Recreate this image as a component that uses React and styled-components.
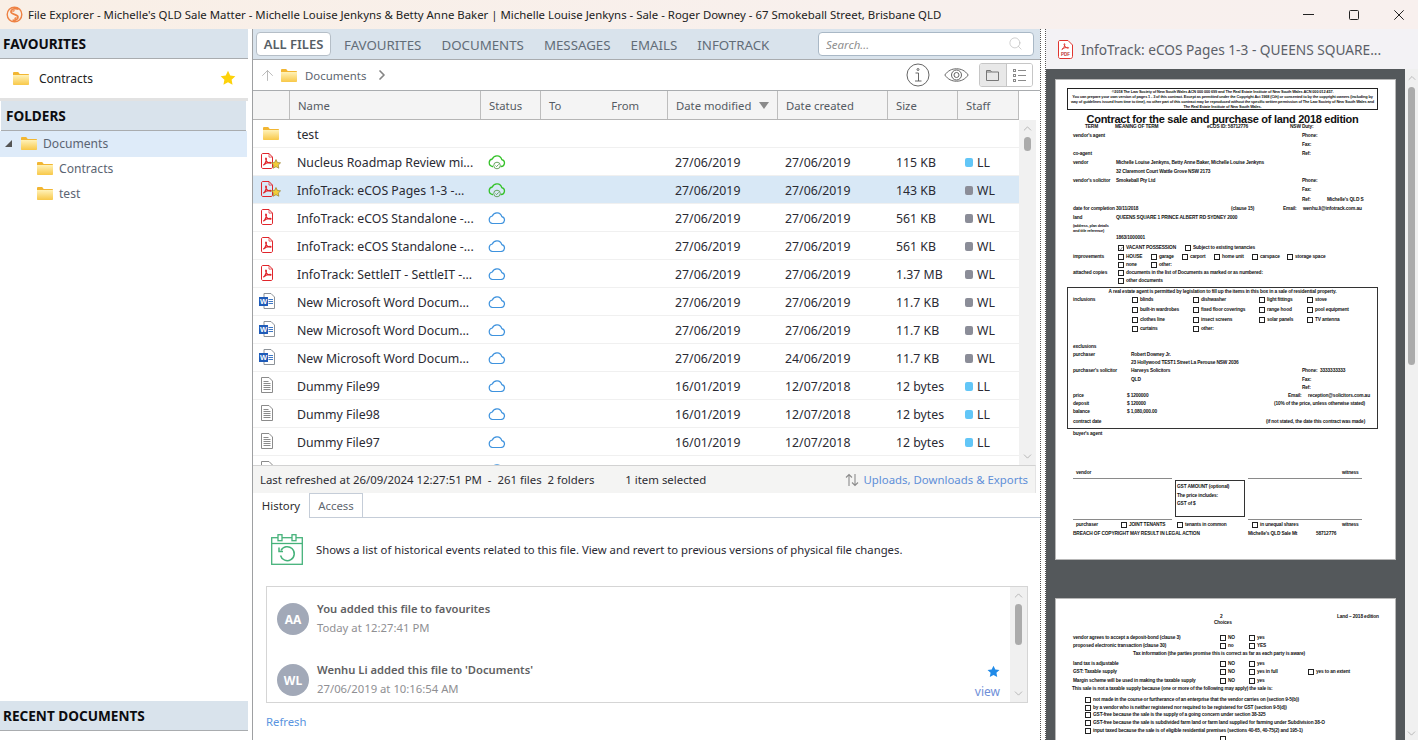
import React from "react";
import styled, { createGlobalStyle, css } from "styled-components";
import { ChevronUp, ChevronDown, ChevronRight, Search, ArrowUp } from "lucide-react";

const UI_FONT = `"Noto Sans", "Open Sans", sans-serif`;

const GlobalStyle = createGlobalStyle`
  html, body { margin: 0; padding: 0; background: #fff; }
  body { font-family: ${UI_FONT}; font-size: 12.3px; color: #2a2a33; }
  * { box-sizing: border-box; }
`;

const Window = styled.div`
  width: 1418px;
  height: 740px;
  overflow: hidden;
  display: flex;
  flex-direction: column;
`;

/* title bar */
const TitleBar = styled.div`
  height: 29px;
  flex: none;
  display: flex;
  align-items: center;
  padding-left: 6px;
  background: linear-gradient(90deg, #f9efe6, #f8f0ed 60%, #f8f0ee);
`;
const TitleText = styled.div`
  margin-left: 5px;
  font-size: 11.4px;
  color: #222;
  white-space: nowrap;
`;
const WindowControls = styled.div`
  margin-left: auto;
  display: flex;
  align-items: center;
  gap: 35px;
  padding-right: 14px;
`;

const Body = styled.div`
  flex: 1;
  display: flex;
  min-height: 0;
`;

/* left column */
const Sidebar = styled.aside`
  width: 252px;
  flex: none;
  display: flex;
  flex-direction: column;
  padding-right: 4px;
`;
const SectionHeader = styled.div`
  height: 30px;
  flex: none;
  display: flex;
  align-items: center;
  padding-left: ${(p) => (p.$inset ? 5 : 3)}px;
  margin: ${(p) => (p.$inset ? "0 2px 0 1px" : "0")};
  background: #d9e3ec;
  border-bottom: 1px solid #a9acaf;
  font-size: 13.6px;
  font-weight: 700;
  color: #0c0c10;
`;
const FavouriteRow = styled.div`
  height: 42px;
  display: flex;
  align-items: center;
  gap: 10px;
  padding: 0 12px 1px 13px;
  font-size: 12px;
  color: #222;
  border-bottom: 3px solid #e2e2e2;
`;
const StarWrap = styled.span`
  margin-left: auto;
  display: flex;
`;
const TreeRow = styled.div`
  height: ${(p) => (p.$root ? 26 : 25)}px;
  display: flex;
  align-items: center;
  gap: 6px;
  padding-left: ${(p) => p.$indent}px;
  padding-bottom: 2px;
  margin-right: 1px;
  background: ${(p) => (p.$active ? "#deebf9" : "transparent")};
  color: #5b6472;
  font-size: 12.1px;
`;
const TreeArrow = styled.span`
  width: 0;
  height: 0;
  margin-right: 3px;
  border-style: solid;
  border-width: 0 0 7px 7px;
  border-color: transparent transparent #555 transparent;
`;
const SidebarFill = styled.div`
  flex: 1;
`;
const SidebarFoot = styled.div`
  height: 9px;
  flex: none;
`;

/* middle column */
const Main = styled.main`
  width: 788px;
  flex: none;
  display: flex;
  flex-direction: column;
  border-left: 1px solid #9ea0a2;
  min-height: 0;
`;
const TabBar = styled.div`
  height: 31px;
  flex: none;
  display: flex;
  align-items: center;
  padding: 3px 6px 4px 3px;
  background: #d9e3ec;
  border-bottom: 1px solid #a9acaf;
`;
const AllFiles = styled.div`
  width: 75px;
  height: 24px;
  display: flex;
  align-items: center;
  justify-content: center;
  padding-top: 1px;
  background: #fff;
  border: 1px solid #b5bec7;
  border-radius: 4px;
  font-size: 13px;
  font-weight: 600;
  color: #565e66;
  margin-right: 13px;
`;
const Tab = styled.div`
  padding-top: 2px;
  font-size: 13.3px;
  color: #626d78;
  margin-right: ${(p) => p.$gap}px;
  white-space: nowrap;
`;
const SearchBox = styled.div`
  margin-left: auto;
  width: 216px;
  height: 24px;
  display: flex;
  align-items: center;
  padding: 0 10px 0 7px;
  background: #fff;
  border: 1px solid #a9b8c6;
  border-radius: 4px;
  color: #b5b5b5;
`;
const SearchField = styled.input`
  flex: 1;
  min-width: 0;
  border: 0;
  outline: 0;
  padding: 2px 0 0;
  font-family: ${UI_FONT};
  font-size: 11.5px;
  font-style: italic;
  &::placeholder { color: #8f8f8f; opacity: 1; }
`;
const PathBar = styled.div`
  height: 31px;
  flex: none;
  display: flex;
  align-items: center;
  padding: 0 7px 0 6px;
  border-bottom: 1px solid #a9acaf;
  font-size: 11.4px;
  color: #5d6570;
`;
const PathText = styled.span`
  margin: 0 8px 0 8px;
`;
const PathGap = styled.span`
  width: 5px;
`;
const PathTools = styled.div`
  margin-left: auto;
  display: flex;
  align-items: center;
  gap: 14px;
`;
const EyeWrap = styled.span`
  display: flex;
  margin-right: -4px;
`;
const ViewToggle = styled.div`
  display: flex;
  width: 54px;
  height: 24px;
  border: 1px solid #c6c6c6;
  border-radius: 3px;
  overflow: hidden;
`;
const ViewOption = styled.div`
  flex: 1;
  display: flex;
  align-items: center;
  justify-content: center;
  background: ${(p) => (p.$on ? "#e8e8e8" : "#fff")};
  & + & { border-left: 1px solid #c6c6c6; }
`;

const columns = css`
  display: grid;
  grid-template-columns: 37px 191px 60px 127px 110px 110px 70px 61px;
  align-items: center;
`;
const HeadRow = styled.div`
  ${columns}
  height: 29px;
  flex: none;
  width: 766px;
  background: #f4f4f4;
  border-bottom: 1px solid #b5b5b5;
  align-items: stretch;
  font-size: 11.3px;
  color: #555b63;
`;
const HeadCell = styled.div`
  display: flex;
  align-items: center;
  padding-left: 8px;
  border-right: 1px solid #bdbdbd;
`;
const HeadFrom = styled.span`
  margin-left: 50px;
`;
const SortMark = styled.span`
  margin-left: 8px;
  width: 0;
  height: 0;
  border-style: solid;
  border-width: 7px 5px 0 5px;
  border-color: #8a8a8a transparent transparent transparent;
`;
const HeadRest = styled.div`
  width: 21px;
`;
const HeadWrap = styled.div`
  display: flex;
  flex: none;
`;
const ListArea = styled.div`
  height: 345px;
  flex: none;
  display: flex;
  width: 783px;
  overflow: hidden;
`;
const Rows = styled.div`
  width: 766px;
  flex: none;
`;
const FileRow = styled.div`
  ${columns}
  height: 28px;
  border-bottom: 1px solid #f0f0f0;
  background: ${(p) => (p.$selected ? "#d8e8f6" : "#fff")};
  font-size: 12.3px;
  color: #2a2a33;
`;
const IconCell = styled.div`
  display: flex;
  align-items: center;
  padding-left: ${(p) => p.$pad}px;
  padding-bottom: 1px;
`;
const NameCell = styled.div`
  padding: 2px 0 0 7px;
  white-space: nowrap;
`;
const PlainCell = styled.div`
  padding: 2px 0 0 ${(p) => p.$pad || 7}px;
  white-space: nowrap;
`;
const StatusCell = styled.div`
  display: flex;
  align-items: center;
  padding: 1px 0 0 7px;
`;
const StaffCell = styled.div`
  display: flex;
  align-items: center;
  gap: 4px;
  padding: 2px 0 0 7px;
`;
const StaffDot = styled.span`
  width: 8px;
  height: 9px;
  border-radius: 2px;
  background: ${(p) => (p.$light ? "#62c6f7" : "#8b8d98")};
`;
const IconStack = styled.span`
  position: relative;
  display: inline-flex;
  width: 21px;
  height: 16px;
`;
const StarBadge = styled.span`
  position: absolute;
  left: 10px;
  top: 6px;
  display: flex;
`;
const ScrollTrack = styled.div`
  width: ${(p) => p.$w}px;
  flex: none;
  display: flex;
  flex-direction: column;
  align-items: center;
  justify-content: space-between;
  background: ${(p) => p.$bg};
  color: #9f9f9f;
  padding: ${(p) => p.$pad};
`;
const ScrollTop = styled.div`
  display: flex;
  flex-direction: column;
  align-items: center;
`;
const ScrollThumb = styled.div`
  width: ${(p) => p.$w}px;
  height: ${(p) => p.$h}px;
  margin-top: ${(p) => p.$top}px;
  border-radius: 4px;
  background: #ababab;
`;
const StatusBar = styled.div`
  width: 783px;
  height: 28px;
  flex: none;
  display: flex;
  align-items: center;
  padding: 0 7px;
  background: #f4f4f3;
  border-top: 1px solid #d2d2d2;
  border-right: 1px solid #e4e4e4;
  font-size: 11.4px;
  color: #2d2d33;
  white-space: pre;
`;
const SelectedCount = styled.span`
  margin-left: 31px;
`;
const Transfers = styled.span`
  margin-left: auto;
  display: flex;
  align-items: center;
  gap: 5px;
  color: #5e8fd8;
`;
const DetailTabs = styled.div`
  height: 25px;
  flex: none;
  display: flex;
  border-bottom: 1px solid #c5cdd8;
`;
const DetailTab = styled.div`
  display: flex;
  align-items: center;
  justify-content: center;
  width: ${(p) => p.$w}px;
  height: ${(p) => (p.$on ? 25 : 24)}px;
  font-size: 11.4px;
  color: ${(p) => (p.$on ? "#2c2c30" : "#5f6770")};
  background: #fff;
  border-right: 1px solid #c5cdd8;
  border-top: ${(p) => (p.$on ? "0" : "1px solid #c5cdd8")};
`;
const Intro = styled.div`
  height: 68px;
  flex: none;
  display: flex;
  align-items: center;
  gap: 13px;
  padding: 0 0 5px 18px;
  font-size: 11.3px;
  color: #2a2a33;
`;
const History = styled.div`
  width: 762px;
  height: 117px;
  flex: none;
  margin-left: 13px;
  display: flex;
  border: 1px solid #d5d5d5;
`;
const HistoryList = styled.div`
  flex: 1;
  padding: 16px 0 0 10px;
  display: flex;
  flex-direction: column;
  gap: 29px;
`;
const HistoryItem = styled.div`
  display: flex;
  align-items: flex-start;
  gap: 8px;
  height: 32px;
`;
const Avatar = styled.div`
  width: 32px;
  height: 32px;
  flex: none;
  border-radius: 50%;
  background: #a2a9b8;
  color: #fff;
  font-size: 12px;
  font-weight: 700;
  display: flex;
  align-items: center;
  justify-content: center;
`;
const ItemText = styled.div`
  flex: 1;
  margin-top: -3px;
`;
const ItemTitle = styled.div`
  font-size: 11.2px;
  font-weight: 600;
  line-height: 18px;
  color: #5f5f63;
`;
const ItemTime = styled.div`
  font-size: 11.3px;
  line-height: 20px;
  color: #8f8f93;
`;
const ItemSide = styled.div`
  display: flex;
  flex-direction: column;
  align-items: flex-end;
  gap: 7px;
  padding: 1px 10px 0 0;
  color: #6f8fd8;
  font-size: 12px;
  line-height: 14px;
`;
const RefreshLink = styled.div`
  margin: 11px 0 0 13px;
  font-size: 11.3px;
  color: #5a94e0;
`;

/* splitter + preview */
const Splitter = styled.div`
  width: 6px;
  flex: none;
  border-left: 1px dotted #555;
  border-right: 1px dotted #555;
`;
const Preview = styled.section`
  flex: 1;
  min-width: 0;
  display: flex;
  flex-direction: column;
`;
const PreviewHead = styled.div`
  height: 40px;
  flex: none;
  display: flex;
  align-items: center;
  gap: 8px;
  padding-left: 12px;
  background: #f3f2f5;
  font-size: 13.7px;
  color: #5b6068;
`;
const PreviewBody = styled.div`
  flex: 1;
  display: flex;
  min-height: 0;
`;
const DocScroll = styled.div`
  width: 359px;
  flex: none;
  background: #54585b;
  padding: 11px 0 0 10px;
  overflow: hidden;
  display: flex;
  flex-direction: column;
  gap: 40px;
`;
const Page = styled.div`
  width: 339px;
  flex: none;
  height: ${(p) => p.$h}px;
  padding-top: ${(p) => p.$pt}px;
  background: #fff;
  box-shadow: 0 0 0 1px #b7b7b7;
  font-family: "Liberation Sans", Arial, sans-serif;
  font-size: 4.8px;
  font-weight: 700;
  letter-spacing: -0.14px;
  color: #111;
`;
const TopBox = styled.div`
  width: 311px;
  height: 22px;
  margin: 8px 0 0 11px;
  border: 1px solid #222;
  font-size: 3.9px;
  line-height: 5px;
  text-align: center;
  overflow: hidden;
`;
const DocTitle = styled.div`
  height: 14px;
  padding-right: 6px;
  text-align: center;
  font-size: 11px;
  line-height: 18px;
  letter-spacing: -0.28px;
  color: #111;
`;
const DocLine = styled.div`
  display: flex;
  line-height: 6px;
  white-space: nowrap;
`;
const DocCell = styled.div`
  display: flex;
  flex: none;
  gap: 2px;
  align-items: flex-start;
`;
const DocCheck = styled.span`
  width: 6px;
  height: 6px;
  flex: none;
  display: flex;
  border: 0.8px solid #222;
`;
const CenterLine = styled.div`
  text-align: center;
  line-height: 6px;
`;
const DocBox = styled.div`
  width: 311px;
  margin: ${(p) => p.$margin};
  border: 1px solid #333;
  padding-top: 1px;
`;
const BoxGap = styled.div`
  height: ${(p) => p.$h}px;
`;
const SignRow = styled.div`
  display: flex;
  height: 43px;
  margin-left: 17px;
  margin-bottom: 1px;
`;
const SignLines = styled.div`
  width: ${(p) => p.$w}px;
  height: 42px;
  border-top: 1.5px solid #8a8a8a;
  border-bottom: 1.5px solid #8a8a8a;
`;
const GstBox = styled.div`
  width: 70px;
  height: 37px;
  margin: 2px 3px 0 3px;
  padding: 2px 1px;
  border: 1px solid #333;
  line-height: 8.5px;
`;

/* drawings */
const Logo = () => (
  <svg width="17" height="17" viewBox="0 0 17 17" fill="none" stroke="#ee8143" strokeWidth="1.4">
    <circle cx="8.5" cy="8.5" r="7.3" />
    <path d="M12.6 3.2C9 1.6 4.6 3.4 5 6.2c.4 2.6 6.800 1.800 7 4.800.1 1.800-2.200 3.600-5.400 3.200" strokeWidth="1.700" />
    <path d="M8.600 4.600c-1.200 0-1.800.6-1.400 1.200M8.400 12.400c1.200 0 1.800-.6 1.400-1.200" />
  </svg>
);
const Minimize = () => (
  <svg width="11" height="11" viewBox="0 0 11 11"><path d="M0 5.500h11" stroke="#222" strokeWidth="1" /></svg>
);
const Restore = () => (
  <svg width="10" height="10" viewBox="0 0 10 10" fill="none"><rect x=".5" y=".5" width="9" height="9" rx="1" stroke="#222" /></svg>
);
const Close = () => (
  <svg width="10" height="10" viewBox="0 0 10 10"><path d="M.3.3l9.400 9.400M9.700.3L.3 9.700" stroke="#222" /></svg>
);
const Folder = () => (
  <svg width="16" height="13" viewBox="0 0 16 13">
    <defs>
      <linearGradient id="folderFill" x1="0" y1="0" x2="0" y2="1">
        <stop offset="0" stopColor="#fff2b8" />
        <stop offset="1" stopColor="#f8c848" />
      </linearGradient>
    </defs>
    <path d="M0 1.200C0 .5.5 0 1.200 0h4l1.500 2H15c.6 0 1 .4 1 1v1H0z" fill="#f2b632" />
    <path d="M0 3h16v9c0 .6-.4 1-1 1H1c-.6 0-1-.4-1-1z" fill="url(#folderFill)" />
  </svg>
);
const Star = ({ size = 14, color = "#fdd20a", stroke = "none" }) => (
  <svg width={size} height={size} viewBox="0 0 20 20">
    <path d="M10 1l2.800 5.900 6.400.8-4.700 4.400 1.200 6.400L10 15.400l-5.700 3.100 1.200-6.400L.8 7.700l6.400-.8z" fill={color} stroke={stroke} strokeWidth="1.200" />
  </svg>
);
const PdfIcon = () => (
  <svg width="12" height="16" viewBox="0 0 12 16" fill="none" stroke="#e0252b">
    <path d="M2 .5h6l3.500 3.600V14c0 .8-.5 1.500-1.500 1.500H2C1 15.500.5 14.800.5 14V2C.5 1 1 .5 2 .5z" />
    <path d="M8 .5v3.600h3.500" strokeWidth=".7" />
    <path d="M2.400 12.200c1.500-.8 3-4 3-6.400 0-1-.9-.8-.7.3.4 2 2 3.700 4.600 4.100 1 .1 1-.9-.2-.9-2 0-4.600.8-6.300 2.400z" strokeWidth="1.200" />
  </svg>
);
const WordIcon = () => (
  <svg width="16" height="16" viewBox="0 0 16 16">
    <path d="M5 .5h7l3.500 3.500v11.500H5z" fill="#fff" stroke="#8d9298" />
    <path d="M9.500 6.500H14M9.500 8.500H14M9.500 10.500H14" stroke="#3f78c4" />
    <rect x="0" y="4" width="9" height="9" fill="#1f5bb8" />
    <text x="4.500" y="11.300" textAnchor="middle" fontSize="7.500" fontWeight="700" fill="#fff" fontFamily="Liberation Sans">W</text>
  </svg>
);
const TextIcon = () => (
  <svg width="12" height="16" viewBox="0 0 12 16" fill="none" stroke="#8b8b8b">
    <path d="M.5.500h7.500l3.500 3.500v11.500H.5z" />
    <path d="M2.500 4.500h5M2.500 6.500h7M2.500 8.500h7M2.500 10.500h7M2.500 12.500h7" />
  </svg>
);
const CLOUD = "M4.500 11.500H13a3.500 3.500 0 0 0 .8-6.900A5 5 0 0 0 4.300 4 3.800 3.800 0 0 0 4.500 11.500z";
const CloudIcon = () => (
  <svg width="18" height="12" viewBox="0 0 18 12" fill="none" stroke="#3f93de" strokeWidth="1.200"><path d={CLOUD} /></svg>
);
const SyncedIcon = () => (
  <svg width="18" height="15" viewBox="0 0 18 15" fill="none" stroke="#35c22a" strokeWidth="1.300">
    <path d="M5 11.500H4.500A3.800 3.800 0 0 1 4.300 4 5 5 0 0 1 13.800 4.600a3.500 3.500 0 0 1-.8 6.900h-.5" />
    <circle cx="9" cy="10.500" r="3.300" stroke="#5a9a50" strokeWidth=".9" />
    <path d="M7.500 10.500l1.100 1.100 2-2.200" stroke="#5a9a50" strokeWidth=".9" />
  </svg>
);
const InfoIcon = () => (
  <svg width="24" height="24" viewBox="0 0 24 24" fill="none" stroke="#555" strokeWidth=".9">
    <circle cx="12" cy="12" r="11" />
    <circle cx="12" cy="6.500" r="1" />
    <path d="M9.500 10h3v8M9 18h6.500" />
  </svg>
);
const EyeIcon = () => (
  <svg width="25" height="14" viewBox="0 0 25 14" fill="none" stroke="#666" strokeWidth="1">
    <path d="M.8 7C4 2.500 8 .8 12.500.8S21 2.500 24.200 7C21 11.500 17 13.200 12.500 13.200S4 11.500.8 7z" />
    <circle cx="12.500" cy="7" r="5" />
    <circle cx="12.500" cy="7" r="2.500" />
  </svg>
);
const FolderOutline = () => (
  <svg width="13" height="11" viewBox="0 0 13 11" fill="none" stroke="#777"><path d="M.5.500h4l1 1.500h7v8.500H.5z" /><path d="M.5 2h5" /></svg>
);
const ListIcon = () => (
  <svg width="13" height="13" viewBox="0 0 13 13" fill="none" stroke="#8a8a8a">
    <rect x=".5" y=".5" width="2" height="2" /><rect x=".5" y="5.500" width="2" height="2" /><rect x=".5" y="10.500" width="2" height="2" />
    <path d="M5 1.500h8M5 6.500h8M5 11.500h8" />
  </svg>
);
const TransferIcon = () => (
  <svg width="14" height="14" viewBox="0 0 14 14" fill="none" stroke="#8c8c8c" strokeWidth="1.100">
    <path d="M4 13V1.500M1 4.500l3-3 3 3" />
    <path d="M10 1v11.500M7 9.500l3 3 3-3" />
  </svg>
);
const CalendarIcon = () => (
  <svg width="32" height="31" viewBox="0 0 32 31" fill="none" stroke="#45b27a" strokeWidth="1.300">
    <rect x=".7" y="3.700" width="30.600" height="26.600" />
    <path d="M.7 9.500h30.600" />
    <rect x="7" y=".7" width="4" height="6" fill="#fff" />
    <rect x="21" y=".7" width="4" height="6" fill="#fff" />
    <path d="M10 16.500a7 7 0 1 1-.5 5" strokeWidth="1.500" />
    <path d="M8 13.500v4h4" strokeWidth="1.500" />
  </svg>
);
const PdfBadge = () => (
  <svg width="15" height="19" viewBox="0 0 15 19" fill="none" stroke="#e0352f">
    <path d="M2 .5h8l4.500 4.500v11.500c0 1-.7 2-2 2H2c-1 0-1.500-1-1.500-2V2C.5 1 1 .5 2 .5z" fill="#fff" />
    <path d="M3.800 9.500c1.600-.8 3-3.200 3-5.200 0-1-.9-.8-.7.2.4 1.800 1.800 3.400 3.800 3.700 1 .1 1-.8-.2-.8-1.800 0-4.300.5-5.900 2.100z" strokeWidth="1" />
    <text x="7.500" y="16" textAnchor="middle" fontSize="4.500" fontWeight="700" stroke="none" fill="#b33" fontFamily="Liberation Sans">PDF</text>
  </svg>
);
const TickMark = () => (
  <svg width="5" height="5" viewBox="0 0 5 5" fill="none" stroke="#666" strokeWidth=".8"><path d="M.6 2.400l1.400 1.800L4.400.6" /></svg>
);

/* data */
const FILES = [
  { icon: "folder", name: "test" },
  { icon: "pdf", star: true, name: "Nucleus Roadmap Review mi...", synced: true, mod: "27/06/2019", made: "27/06/2019", size: "115 KB", staff: "LL" },
  { icon: "pdf", star: true, name: "InfoTrack: eCOS Pages 1-3 -...", synced: true, mod: "27/06/2019", made: "27/06/2019", size: "143 KB", staff: "WL", selected: true },
  { icon: "pdf", name: "InfoTrack: eCOS Standalone -...", mod: "27/06/2019", made: "27/06/2019", size: "561 KB", staff: "WL" },
  { icon: "pdf", name: "InfoTrack: eCOS Standalone -...", mod: "27/06/2019", made: "27/06/2019", size: "561 KB", staff: "WL" },
  { icon: "pdf", name: "InfoTrack: SettleIT - SettleIT -...", mod: "27/06/2019", made: "27/06/2019", size: "1.37 MB", staff: "WL" },
  { icon: "word", name: "New Microsoft Word Docum...", mod: "27/06/2019", made: "27/06/2019", size: "11.7 KB", staff: "WL" },
  { icon: "word", name: "New Microsoft Word Docum...", mod: "27/06/2019", made: "27/06/2019", size: "11.7 KB", staff: "WL" },
  { icon: "word", name: "New Microsoft Word Docum...", mod: "27/06/2019", made: "24/06/2019", size: "11.7 KB", staff: "WL" },
  { icon: "text", name: "Dummy File99", mod: "16/01/2019", made: "12/07/2018", size: "12 bytes", staff: "LL" },
  { icon: "text", name: "Dummy File98", mod: "16/01/2019", made: "12/07/2018", size: "12 bytes", staff: "LL" },
  { icon: "text", name: "Dummy File97", mod: "16/01/2019", made: "12/07/2018", size: "12 bytes", staff: "LL" },
  { icon: "text", name: "" },
];

const t = (x, text) => ({ x, text });
const b = (x, text, checked) => ({ x, text, box: true, checked });

const PAGE_ONE_A = [
  { y: 127, cells: [t(1085, "TERM"), t(1115, "MEANING OF TERM"), t(1207, "eCOS ID: 58712776"), t(1290, "NSW Duty:")] },
  { y: 136, cells: [t(1073, "vendor's agent"), t(1302, "Phone:")] },
  { y: 145, cells: [t(1302, "Fax:")] },
  { y: 154, cells: [t(1073, "co-agent"), t(1302, "Ref:")] },
  { y: 163, cells: [t(1073, "vendor"), t(1116, "Michelle Louise Jenkyns, Betty Anne Baker, Michelle Louise Jenkyns")] },
  { y: 172, cells: [t(1116, "32 Claremont Court Wattle Grove NSW 2173")] },
  { y: 181, cells: [t(1073, "vendor's solicitor"), t(1116, "Smokeball Pty Ltd"), t(1302, "Phone:")] },
  { y: 190, cells: [t(1302, "Fax:")] },
  { y: 200, cells: [t(1302, "Ref:"), t(1327, "Michelle's QLD S")] },
  { y: 209, cells: [t(1073, "date for completion"), t(1116, "30/11/2018"), t(1231, "(clause 15)"), t(1283, "Email:"), t(1303, "wenhu.li@infotrack.com.au")] },
  { y: 218, cells: [t(1073, "land"), t(1116, "QUEENS SQUARE 1 PRINCE ALBERT RD SYDNEY 2000")] },
  { y: 226, small: true, cells: [t(1073, "(address, plan details")] },
  { y: 231, small: true, cells: [t(1073, "and title reference)")] },
  { y: 238, cells: [t(1116, "1863/1000001")] },
  { y: 248, cells: [b(1118, "VACANT POSSESSION", true), b(1185, "Subject to existing tenancies")] },
  { y: 257, cells: [t(1073, "improvements"), b(1118, "HOUSE"), b(1151, "garage"), b(1182, "carport"), b(1214, "home unit"), b(1252, "carspace"), b(1287, "storage space")] },
  { y: 265, cells: [b(1118, "none"), b(1151, "other:")] },
  { y: 273, cells: [t(1073, "attached copies"), b(1118, "documents in the list of Documents as marked or as numbered:")] },
  { y: 281, cells: [b(1118, "other documents")] },
];
const PAGE_ONE_BOX = [
  { y: 300, cells: [t(1073, "inclusions"), b(1132, "blinds"), b(1193, "dishwasher"), b(1259, "light fittings"), b(1307, "stove")] },
  { y: 310, cells: [b(1132, "built-in wardrobes"), b(1193, "fixed floor coverings"), b(1259, "range hood"), b(1307, "pool equipment")] },
  { y: 320, cells: [b(1132, "clothes line"), b(1193, "insect screens"), b(1259, "solar panels"), b(1307, "TV antenna")] },
  { y: 329, cells: [b(1132, "curtains"), b(1193, "other:")] },
  { y: 347, cells: [t(1073, "exclusions")] },
  { y: 355, cells: [t(1073, "purchaser"), t(1131, "Robert Downey Jr.")] },
  { y: 363, cells: [t(1131, "23 Hollywood TEST1 Street La Perouse NSW 2036")] },
  { y: 371, cells: [t(1073, "purchaser's solicitor"), t(1131, "Harveys Solicitors"), t(1302, "Phone:"), t(1320, "3333333333")] },
  { y: 380, cells: [t(1131, "QLD"), t(1302, "Fax:")] },
  { y: 388, cells: [t(1302, "Ref:")] },
  { y: 396, cells: [t(1073, "price"), t(1127, "$ 1200000"), t(1288, "Email:"), t(1308, "reception@solicitors.com.au")] },
  { y: 404, cells: [t(1073, "deposit"), t(1127, "$ 120000"), t(1274, "(10% of the price, unless otherwise stated)")] },
  { y: 412, cells: [t(1073, "balance"), t(1127, "$ 1,080,000.00")] },
  { y: 422, cells: [t(1073, "contract date"), t(1266, "(if not stated, the date this contract was made)")] },
];
const PAGE_ONE_C = [
  { y: 434, cells: [t(1073, "buyer's agent")] },
  { y: 473, cells: [t(1076, "vendor"), t(1342, "witness")] },
];
const PAGE_ONE_D = [
  { y: 525, cells: [t(1076, "purchaser"), b(1121, "JOINT TENANTS"), b(1177, "tenants in common"), b(1252, "in unequal shares"), t(1342, "witness")] },
  { y: 534, cells: [t(1073, "BREACH OF COPYRIGHT MAY RESULT IN LEGAL ACTION"), t(1248, "Michelle's QLD Sale Mt"), t(1316, "58712776")] },
];
const PAGE_TWO_A = [
  { y: 617, cells: [t(1220, "2"), t(1337, "Land – 2018 edition")] },
  { y: 623, cells: [t(1214, "Choices")] },
  { y: 638, cells: [t(1073, "vendor agrees to accept a deposit-bond (clause 3)"), b(1220, "NO"), b(1249, "yes")] },
  { y: 646, cells: [t(1073, "proposed electronic transaction (clause 30)"), b(1220, "no"), b(1249, "YES")] },
  { y: 654, cells: [t(1133, "Tax information (the parties promise this is correct as far as each party is aware)")] },
  { y: 664, cells: [t(1073, "land tax is adjustable"), b(1220, "NO"), b(1249, "yes")] },
  { y: 672, cells: [t(1073, "GST: Taxable supply"), b(1220, "NO"), b(1249, "yes in full"), b(1308, "yes to an extent")] },
  { y: 681, cells: [t(1073, "Margin scheme will be used in making the taxable supply"), b(1220, "NO"), b(1249, "yes")] },
  { y: 689, cells: [t(1072, "This sale is not a taxable supply because (one or more of the following may apply) the sale is:")] },
  { y: 700, cells: [b(1085, "not made in the course or furtherance of an enterprise that the vendor carries on (section 9-5(b))")] },
  { y: 708, cells: [b(1085, "by a vendor who is neither registered nor required to be registered for GST (section 9-5(d))")] },
  { y: 715, cells: [b(1085, "GST-free because the sale is the supply of a going concern under section 38-325")] },
  { y: 723, cells: [b(1085, "GST-free because the sale is subdivided farm land or farm land supplied for farming under Subdivision 38-O")] },
  { y: 731, cells: [b(1085, "input taxed because the sale is of eligible residential premises (sections 40-65, 40-75(2) and 195-1)")] },
  { y: 739, cells: [b(1220, "")] },
];

const FileIcon = ({ file }) => {
  if (file.icon === "folder") return <IconCell $pad={10}><Folder /></IconCell>;
  if (file.icon === "word") return <IconCell $pad={6}><WordIcon /></IconCell>;
  if (file.icon === "text") return <IconCell $pad={8}><TextIcon /></IconCell>;
  return (
    <IconCell $pad={8}>
      <IconStack>
        <PdfIcon />
        {file.star && <StarBadge><Star size={10} color="#f2cc3a" stroke="#8a7420" /></StarBadge>}
      </IconStack>
    </IconCell>
  );
};

// x positions in the rows are page coordinates, so a cell's width comes from the next cell
const DocRows = ({ rows, originX, end }) =>
  rows.map((row, i) => {
    const height = (rows[i + 1] ? rows[i + 1].y : end) - row.y;
    return (
      <DocLine key={row.y} style={{ height, fontSize: row.small ? 3.8 : undefined }}>
        {row.cells.map((cell, j) => {
          const next = row.cells[j + 1];
          const start = j === 0 ? originX : cell.x;
          const pad = j === 0 ? cell.x - originX : 0;
          const width = next ? next.x - start : undefined;
          return (
            <DocCell key={j} style={{ width, paddingLeft: pad }}>
              {cell.box && <DocCheck>{cell.checked && <TickMark />}</DocCheck>}
              {cell.text}
            </DocCell>
          );
        })}
      </DocLine>
    );
  });

const SCROLL_CHEVRON = { size: 13, strokeWidth: 1.3 };

const App = () => {
  return (
    <Window>
      <GlobalStyle />
      <TitleBar>
        <Logo />
        <TitleText>File Explorer - Michelle's QLD Sale Matter - Michelle Louise Jenkyns &amp; Betty Anne Baker | Michelle Louise Jenkyns - Sale - Roger Downey - 67 Smokeball Street, Brisbane QLD</TitleText>
        <WindowControls>
          <Minimize />
          <Restore />
          <Close />
        </WindowControls>
      </TitleBar>
      <Body>
        <Sidebar>
          <SectionHeader>FAVOURITES</SectionHeader>
          <FavouriteRow>
            <Folder />
            Contracts
            <StarWrap><Star size={16} /></StarWrap>
          </FavouriteRow>
          <SectionHeader $inset>FOLDERS</SectionHeader>
          <TreeRow $root $active $indent={5}>
            <TreeArrow />
            <Folder />
            Documents
          </TreeRow>
          <TreeRow $indent={37}><Folder />Contracts</TreeRow>
          <TreeRow $indent={37}><Folder />test</TreeRow>
          <SidebarFill />
          <SectionHeader>RECENT DOCUMENTS</SectionHeader>
          <SidebarFoot />
        </Sidebar>
        <Main>
          <TabBar>
            <AllFiles>ALL FILES</AllFiles>
            <Tab $gap={20}>FAVOURITES</Tab>
            <Tab $gap={20}>DOCUMENTS</Tab>
            <Tab $gap={20}>MESSAGES</Tab>
            <Tab $gap={20}>EMAILS</Tab>
            <Tab $gap={0}>INFOTRACK</Tab>
            <SearchBox>
              <SearchField placeholder="Search..." />
              <Search size={15} strokeWidth={1} />
            </SearchBox>
          </TabBar>
          <PathBar>
            <ArrowUp size={17} strokeWidth={1.3} color="#b5b5b5" />
            <PathGap />
            <Folder />
            <PathText>Documents</PathText>
            <ChevronRight size={16} strokeWidth={2.6} color="#858585" />
            <PathTools>
              <InfoIcon />
              <EyeWrap><EyeIcon /></EyeWrap>
              <ViewToggle>
                <ViewOption $on><FolderOutline /></ViewOption>
                <ViewOption><ListIcon /></ViewOption>
              </ViewToggle>
            </PathTools>
          </PathBar>
          <HeadWrap>
            <HeadRow>
              <HeadCell />
              <HeadCell>Name</HeadCell>
              <HeadCell>Status</HeadCell>
              <HeadCell>To<HeadFrom>From</HeadFrom></HeadCell>
              <HeadCell>Date modified<SortMark /></HeadCell>
              <HeadCell>Date created</HeadCell>
              <HeadCell>Size</HeadCell>
              <HeadCell>Staff</HeadCell>
            </HeadRow>
            <HeadRest />
          </HeadWrap>
          <ListArea>
            <Rows>
              {FILES.map((file, i) => (
                <FileRow key={i} $selected={file.selected}>
                  <FileIcon file={file} />
                  <NameCell>{file.name}</NameCell>
                  <StatusCell>
                    {file.icon !== "folder" && (file.synced ? <SyncedIcon /> : <CloudIcon />)}
                  </StatusCell>
                  <PlainCell />
                  <PlainCell>{file.mod}</PlainCell>
                  <PlainCell>{file.made}</PlainCell>
                  <PlainCell $pad={8}>{file.size}</PlainCell>
                  {file.staff ? (
                    <StaffCell><StaffDot $light={file.staff === "LL"} />{file.staff}</StaffCell>
                  ) : <PlainCell />}
                </FileRow>
              ))}
            </Rows>
            <ScrollTrack $w={17} $bg="#f1f1f1" $pad="2px 0 2px">
              <ScrollTop>
                <ChevronUp {...SCROLL_CHEVRON} />
                <ScrollThumb $w={7} $h={14} $top={2} />
              </ScrollTop>
              <ChevronDown {...SCROLL_CHEVRON} />
            </ScrollTrack>
          </ListArea>
          <StatusBar>
            Last refreshed at 26/09/2024 12:27:51 PM  -  261 files  2 folders
            <SelectedCount>1 item selected</SelectedCount>
            <Transfers><TransferIcon />Uploads, Downloads &amp; Exports</Transfers>
          </StatusBar>
          <DetailTabs>
            <DetailTab $on $w={57}>History</DetailTab>
            <DetailTab $w={53}>Access</DetailTab>
          </DetailTabs>
          <Intro>
            <CalendarIcon />
            Shows a list of historical events related to this file. View and revert to previous versions of physical file changes.
          </Intro>
          <History>
            <HistoryList>
              <HistoryItem>
                <Avatar>AA</Avatar>
                <ItemText>
                  <ItemTitle>You added this file to favourites</ItemTitle>
                  <ItemTime>Today at 12:27:41 PM</ItemTime>
                </ItemText>
              </HistoryItem>
              <HistoryItem>
                <Avatar>WL</Avatar>
                <ItemText>
                  <ItemTitle>Wenhu Li added this file to 'Documents'</ItemTitle>
                  <ItemTime>27/06/2019 at 10:16:54 AM</ItemTime>
                </ItemText>
                <ItemSide>
                  <Star size={13} color="#1f8ae8" />
                  view
                </ItemSide>
              </HistoryItem>
            </HistoryList>
            <ScrollTrack $w={17} $bg="#f0f0f0" $pad="2px 0">
              <ScrollTop>
                <ChevronUp {...SCROLL_CHEVRON} />
                <ScrollThumb $w={7} $h={41} $top={2} />
              </ScrollTop>
              <ChevronDown {...SCROLL_CHEVRON} />
            </ScrollTrack>
          </History>
          <RefreshLink>Refresh</RefreshLink>
        </Main>
        <Splitter />
        <Preview>
          <PreviewHead>
            <PdfBadge />
            InfoTrack: eCOS Pages 1-3 - QUEENS SQUARE...
          </PreviewHead>
          <PreviewBody>
            <DocScroll>
              <Page $h={479} $pt={0}>
                <TopBox>
                  ©2018 The Law Society of New South Wales ACN 000 000 699 and The Real Estate Institute of New South Wales ACN 000 012 457.<br />
                  You can prepare your own version of pages 1 - 3 of this contract. Except as permitted under the Copyright Act 1968 (Cth) or consented to by the copyright owners (including by<br />
                  way of guidelines issued from time to time), no other part of this contract may be reproduced without the specific written permission of The Law Society of New South Wales and<br />
                  The Real Estate Institute of New South Wales.
                </TopBox>
                <DocTitle>Contract for the sale and purchase of land 2018 edition</DocTitle>
                <DocRows rows={PAGE_ONE_A} originX={1056} end={287} />
                <DocBox $margin="3px 0 0 11px">
                  <CenterLine>A real estate agent is permitted by legislation to fill up the items in this box in a sale of residential property.</CenterLine>
                  <BoxGap $h={2} />
                  <DocRows rows={PAGE_ONE_BOX} originX={1068} end={431} />
                </DocBox>
                <BoxGap $h={2} />
                <DocRows rows={PAGE_ONE_C} originX={1056} end={481} />
                <SignRow>
                  <SignLines $w={99} />
                  <GstBox>
                    GST AMOUNT (optional)<br />
                    The price includes:<br />
                    GST of $
                  </GstBox>
                  <SignLines $w={114} />
                </SignRow>
                <DocRows rows={PAGE_ONE_D} originX={1056} end={545} />
              </Page>
              <Page $h={200} $pt={15}>
                <DocRows rows={PAGE_TWO_A} originX={1056} end={750} />
              </Page>
            </DocScroll>
            <ScrollTrack $w={13} $bg="#f0f0f0" $pad="3px 0 0">
              <ScrollTop>
                <ChevronUp size={12} strokeWidth={1.3} />
                <ScrollThumb $w={7} $h={278} $top={3} />
              </ScrollTop>
              <ChevronDown size={13} strokeWidth={1.3} />
            </ScrollTrack>
          </PreviewBody>
        </Preview>
      </Body>
    </Window>
  );
};

export default App;
